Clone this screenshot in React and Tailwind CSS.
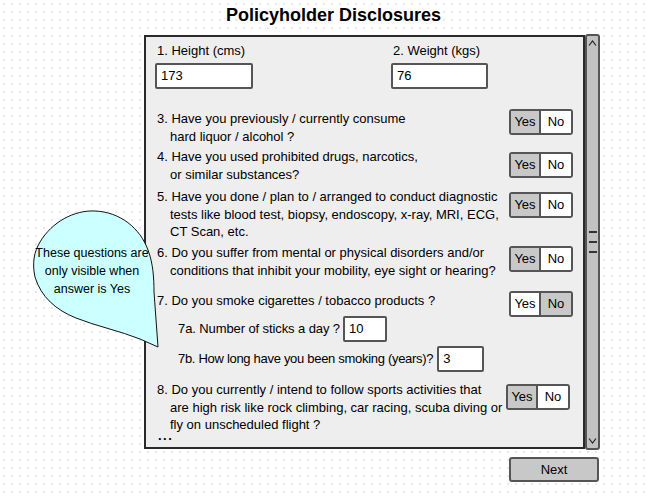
import React from 'react'

const FONT = { fontFamily: "'Liberation Sans', Arial, sans-serif" }

function Toggle({ yes, className = '' }) {
  return (
    <div className={`flex h-[26px] w-[64px] shrink-0 overflow-hidden rounded-[3px] border-2 border-[#555] text-[13px] ${className}`}>
      <div className={`flex w-[30px] items-center justify-center border-r-2 border-[#555] ${yes ? 'bg-[#c8c8c8]' : 'bg-white'}`}>Yes</div>
      <div className={`flex flex-1 items-center justify-center ${yes ? 'bg-white' : 'bg-[#c8c8c8]'}`}>No</div>
    </div>
  )
}

function Field({ value, className = '' }) {
  return (
    <div className={`flex h-[26px] shrink-0 items-center rounded-[2px] border-2 border-[#555] bg-white pl-[4px] text-[13px] ${className}`}>
      {value}
    </div>
  )
}

function Question({ lines, yes, textTop = 0, top, toggleClass = '' }) {
  return (
    <div className="flex items-start justify-between" style={{ marginTop: top }}>
      <div className="ml-[2px] whitespace-nowrap text-[13px] leading-[17.5px]" style={{ marginTop: textTop }}>
        {lines.map((l, i) => (
          <div key={i} className={i > 0 ? 'pl-[13px]' : ''}>{l}</div>
        ))}
      </div>
      <Toggle yes={yes} className={toggleClass} />
    </div>
  )
}

function Chevron({ up }) {
  return (
    <svg width="9" height="6" viewBox="0 0 9 6" className="shrink-0">
      <path d={up ? 'M1 5.5 L4.5 1 L8 5.5' : 'M1 0.5 L4.5 5 L8 0.5'} fill="none" stroke="#222" strokeWidth="1.2" />
    </svg>
  )
}

export default function App() {
  return (
    <div
      className="relative h-[497px] w-[650px] overflow-hidden bg-white bg-[radial-gradient(circle,#dcdcdc_0.6px,transparent_0.9px)] bg-size-[8px_8px] text-black"
      style={FONT}
    >
      {/* Title */}
      <div className="flex h-[31px] items-center pl-[226px] text-[18px] font-bold">Policyholder Disclosures</div>

      {/* Panel + scrollbar */}
      <div className="ml-[144px] mt-[3px] flex items-start">
        <div className="mt-[1px] h-[414px] w-[441px] overflow-hidden border-2 border-[#2a2a2a] bg-[#eeeeee] pl-[9px] pr-[10px] pt-[5px]">
          <div className="flex">
            <div className="w-[236px]">
              <div className="pl-[2px] text-[13px] leading-[18px]">1. Height (cms)</div>
              <Field value="173" className="mt-[3px] w-[98px]" />
            </div>
            <div>
              <div className="pl-[2px] text-[13px] leading-[18px]">2. Weight (kgs)</div>
              <Field value="76" className="mt-[3px] w-[97px]" />
            </div>
          </div>

          <Question top={20} textTop={1} yes lines={['3. Have you previously / currently consume', 'hard liquor / alcohol ?']} />
          <Question top={3} toggleClass="mt-[4px]" yes lines={['4. Have you used prohibited drugs, narcotics,', 'or similar substances?']} />
          <Question
            top={5}
            toggleClass="mt-[4px]"
            yes
            lines={['5. Have you done / plan to / arranged to conduct diagnostic', 'tests like blood test, biopsy, endoscopy, x-ray, MRI, ECG,', 'CT Scan, etc.']}
          />
          <Question
            top={3.5}
            toggleClass="mt-[2px]"
            yes
            lines={['6. Do you suffer from mental or physical disorders and/or', 'conditions that inhibit your mobility, eye sight or hearing?']}
          />
          <Question top={12} textTop={1} yes={false} lines={['7. Do you smoke cigarettes / tobacco products ?']} />

          <div className="mt-[-1px] flex items-center whitespace-nowrap pl-[23px] text-[13px]">
            <span className="tracking-[-0.1px]">7a. Number of sticks a day ?</span>
            <Field value="10" className="ml-[3px] w-[44px]" />
          </div>
          <div className="mt-[4px] flex items-center whitespace-nowrap pl-[23px] text-[13px]">
            <span className="tracking-[-0.3px]">7b. How long have you been smoking (years)?</span>
            <Field value="3" className="ml-[4px] w-[47px]" />
          </div>

          <Question
            top={9}
            toggleClass="mt-[3px] mr-[3px]"
            yes
            lines={['8. Do you currently / intend to follow sports activities that', 'are high risk like rock climbing, car racing, scuba diving or', 'fly on unscheduled flight ?']}
          />
          <div className="mt-[-5px] pl-[3px] text-[13px] font-bold leading-none tracking-[1.5px]">...</div>
        </div>

        <div className="flex h-[416px] w-[15px] flex-col items-center justify-between rounded-[3px] border-2 border-[#555] bg-[#c2c2c2] py-[4px]">
          <Chevron up />
          <div className="flex h-[22px] flex-col justify-between">
            <div className="h-[2px] w-[8px] bg-[#333]" />
            <div className="h-[2px] w-[8px] bg-[#333]" />
            <div className="h-[2px] w-[8px] bg-[#333]" />
          </div>
          <Chevron />
        </div>
      </div>

      {/* Next */}
      <div className="ml-[509px] mt-[7px] flex h-[25px] w-[90px] items-center justify-center rounded-[3px] border-2 border-[#555] bg-[#c8c8c8] text-[13px]">
        Next
      </div>

      {/* Callout */}
      <svg className="absolute left-0 top-0" width="170" height="360" viewBox="0 0 170 360">
        <path
          d="M40 242 C52 222 74 210 95 211 C120 212 140 228 148 250 C153 263 154 278 154 292 L158 347 L140 339 C120 331 96 326 76 318 C56 310 41 297 35 277 C32 263 34 252 40 242 Z"
          fill="#ccffff"
          stroke="#111"
          strokeWidth="1"
        />
      </svg>
      <div className="absolute left-[30px] top-[244px] w-[124px] text-center text-[12.5px] leading-[18px]">
        These questions are
        <br />
        only visible when
        <br />
        answer is Yes
      </div>
    </div>
  )
}
